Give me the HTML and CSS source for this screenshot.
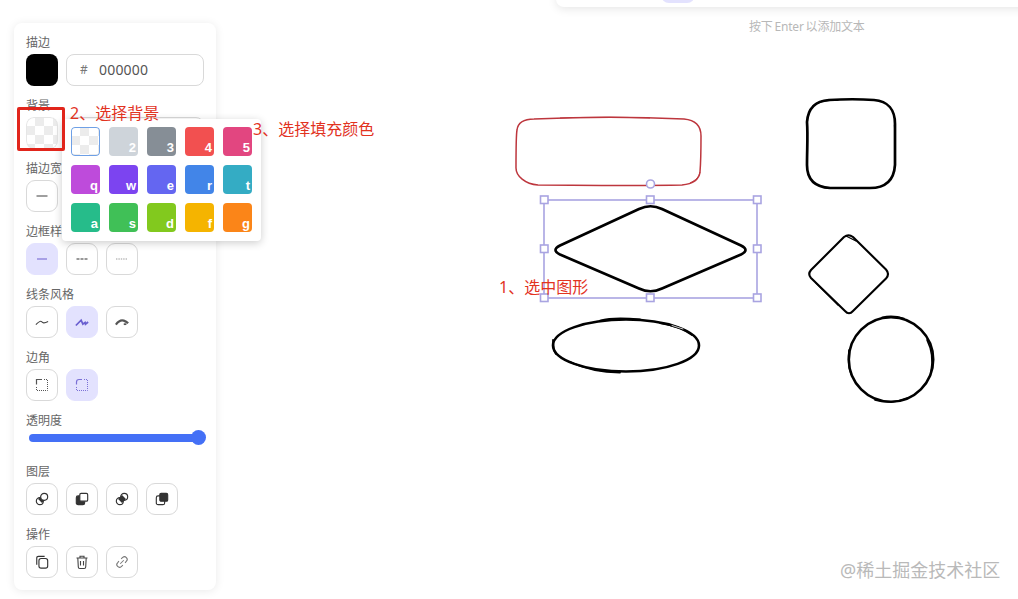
FILE: index.html
```html
<!DOCTYPE html>
<html lang="zh-CN">
<head>
<meta charset="utf-8">
<title>Whiteboard</title>
<link rel="stylesheet" href="styles.css">
</head>
<body>
<svg class="canvas" width="1018" height="599" viewBox="0 0 1018 599" fill="none">
  <g stroke="#bd363d" stroke-width="1.5">
    <path d="M534 119C580 117 640 117 684 119C695 120 701 126 701 136C701 150 701 160 700 172C699 181 692 184 682 185C630 186 570 185 538 185C525 184 516 176 516 168C516 150 516 135 517 130C518 122 525 119 534 119Z"/>
    <path stroke-width="1" d="M560 118C590 117 620 117 650 118M690 183C696 180 699 177 700 172"/>
  </g>
  <g stroke="#000" stroke-linecap="round" stroke-linejoin="round">
    <path stroke-width="2.7" d="M639 209Q650.500 203.500 662 209L741 245.500Q750 250 741 254.500L662 288.500Q650.500 294 639 288.500L560 254.500Q551 250 560 245.500Z"/>
    <path stroke-width="2.7" d="M829 100C845 99 860 99 874 100C888 101 895 110 895 124C895 140 895 150 895 165C894 180 886 188 870 188C855 188 842 188 830 188C814 187 807 179 807 165C807 150 808 135 807 122C808 108 815 101 829 100Z"/>
    <path stroke-width="1.300" d="M894.500 125C895.500 140 895.500 150 894.500 168M813 106C820 100 830 100 838 100M825 187.500C840 188.500 850 188.500 862 188"/>
    <path stroke-width="2.100" d="M844 237Q848.500 233.500 853 237L886 269.500Q890 274 886 278.500L853 311Q849 315.500 845 311L811 278Q807.500 274 811 270Z"/>
    <path stroke-width="1.300" d="M816 283L838 305M846 236L856 241"/>
    <circle cx="891" cy="359.500" r="42.200" stroke-width="2.600"/>
    <path stroke-width="1.600" d="M882 317.500C888 316 896 316 904 318.500M875 400C885 403 895 403 908 398M849 350C848 358 848 365 851 374M927 340C932 350 933 362 931 372"/>
    <ellipse cx="626" cy="345.500" rx="73" ry="26" stroke-width="2.600"/>
    <path stroke-width="1.800" d="M600 320.500C610 318 625 318 640 319.500M570 362C585 369 600 372.500 620 372.500M553 340C553 345 553 350 556 354M660 323C672 325 684 329 692 335"/>
    <path stroke="#fff" stroke-width="0.800" d="M672 325.500L683 329"/>
  </g>
  <g stroke="#a9a4e1" stroke-width="1.600">
    <rect x="544" y="200" width="213" height="98"/>
    <circle cx="650.500" cy="184" r="4" fill="#fff"/>
    <g fill="#fff">
      <rect x="540.500" y="196" width="7.500" height="7.500"/>
      <rect x="646.500" y="196" width="7.500" height="7.500"/>
      <rect x="753.500" y="196" width="7.500" height="7.500"/>
      <rect x="540.500" y="245" width="7.500" height="7.500"/>
      <rect x="753.500" y="245" width="7.500" height="7.500"/>
      <rect x="540.500" y="294" width="7.500" height="7.500"/>
      <rect x="646.500" y="294" width="7.500" height="7.500"/>
      <rect x="753.500" y="294" width="7.500" height="7.500"/>
    </g>
  </g>
</svg>

<div class="toolbar"><span class="toolbar-active"></span></div>
<div class="hint">按下 Enter 以添加文本</div>

<aside class="panel">
  <section class="group">
    <div class="label">描边</div>
    <div class="row">
      <span class="color-swatch black"></span>
      <div class="hex"><span class="hash">#</span><span>000000</span></div>
    </div>
  </section>

  <section class="group anchor">
    <div class="label">背景</div>
    <div class="row">
      <span class="color-swatch checker"></span>
      <div class="hex"></div>
    </div>
    <div class="popup">
      <span class="sw checker selected"></span>
      <span class="sw c2">2</span>
      <span class="sw c3">3</span>
      <span class="sw c4">4</span>
      <span class="sw c5">5</span>
      <span class="sw cq">q</span>
      <span class="sw cw">w</span>
      <span class="sw ce">e</span>
      <span class="sw cr">r</span>
      <span class="sw ct">t</span>
      <span class="sw ca">a</span>
      <span class="sw cs">s</span>
      <span class="sw cd">d</span>
      <span class="sw cf">f</span>
      <span class="sw cg">g</span>
    </div>
  </section>

  <section class="group">
    <div class="label">描边宽度</div>
    <div class="row">
      <button class="btn"><svg width="16" height="16" viewBox="0 0 16 16"><path d="M2.500 8H13.500" stroke="#888" stroke-width="1.600"/></svg></button>
      <button class="btn"></button>
      <button class="btn"></button>
    </div>
  </section>

  <section class="group">
    <div class="label">边框样式</div>
    <div class="row">
      <button class="btn active"><svg width="16" height="16" viewBox="0 0 16 16"><path d="M3 8H13" stroke="#8f85dc" stroke-width="1.400"/></svg></button>
      <button class="btn"><svg width="16" height="16" viewBox="0 0 16 16"><path d="M2.500 8H13.500" stroke="#777" stroke-width="1.500" stroke-dasharray="3 1"/></svg></button>
      <button class="btn"><svg width="16" height="16" viewBox="0 0 16 16"><path d="M2 8H14" stroke="#999" stroke-width="1.200" stroke-dasharray="1.400 1"/></svg></button>
    </div>
  </section>

  <section class="group">
    <div class="label">线条风格</div>
    <div class="row">
      <button class="btn"><svg class="small" viewBox="0 0 16 16" fill="none"><path d="M1 11C4 8 6 6 7.500 7.500C9 9 10 10 15 7.500" stroke="#444" stroke-width="1.300"/></svg></button>
      <button class="btn active"><svg class="small" viewBox="0 0 16 16" fill="none"><path d="M1 12L7 6L9 10.500L11.500 8.500L12 10.500L15 8" stroke="#6a5fd0" stroke-width="2"/></svg></button>
      <button class="btn"><svg class="small" viewBox="0 0 16 16" fill="none"><path d="M1 11C4 7 7 5.500 10 6.500C12.500 7.300 14 8.500 15 9.500" stroke="#555" stroke-width="2.600"/><path d="M10 10.500L13 10.500" stroke="#555" stroke-width="2"/></svg></button>
    </div>
  </section>

  <section class="group">
    <div class="label">边角</div>
    <div class="row">
      <button class="btn"><svg width="14" height="14" viewBox="0 0 14 14" fill="none"><path d="M1.500 6.500V1.500H7" stroke="#555" stroke-width="1.200"/><path d="M9 1.500H12.500V12.500H1.500V8" stroke="#555" stroke-dasharray="1 1"/></svg></button>
      <button class="btn active"><svg width="14" height="14" viewBox="0 0 14 14" fill="none"><path d="M1.500 6.500V4Q1.500 1.500 4 1.500H7" stroke="#7b70d6" stroke-width="1.200"/><path d="M9 1.500H12.500V12.500H1.500V8" stroke="#7b70d6" stroke-dasharray="1 1"/></svg></button>
    </div>
  </section>

  <section class="group">
    <div class="label">透明度</div>
    <div class="slider"><span class="thumb"></span></div>
  </section>

  <section class="group">
    <div class="label">图层</div>
    <div class="row">
      <button class="btn"><svg class="small" viewBox="0 0 16 16" fill="none" stroke="#333" stroke-width="1.300"><circle cx="5.500" cy="10.500" r="4" fill="#fff"/><path d="M3.500 8L8 3.500L12.500 8L8 12.500Z" fill="#333" stroke="none"/><circle cx="10.500" cy="5.500" r="4" fill="#fff"/></svg></button>
      <button class="btn"><svg class="small" viewBox="0 0 16 16" fill="none" stroke="#333" stroke-width="1.300"><rect x="1.500" y="4.500" width="9.500" height="10" rx="2" fill="#333"/><rect x="5.500" y="1.500" width="9" height="9" rx="1.500" fill="#fff"/></svg></button>
      <button class="btn"><svg class="small" viewBox="0 0 16 16" fill="none" stroke="#333" stroke-width="1.300"><circle cx="5.500" cy="10.500" r="4" fill="#fff"/><circle cx="10.500" cy="5.500" r="4" fill="#fff"/><path d="M3.500 8L8 3.500L12.500 8L8 12.500Z" fill="#333" stroke="none"/></svg></button>
      <button class="btn"><svg class="small" viewBox="0 0 16 16" fill="none" stroke="#333" stroke-width="1.300"><rect x="1.500" y="4.500" width="9.500" height="10" rx="2" fill="#fff"/><rect x="5.500" y="1.500" width="9" height="9" rx="1.500" fill="#333"/></svg></button>
    </div>
  </section>

  <section class="group last">
    <div class="label">操作</div>
    <div class="row">
      <button class="btn"><svg class="small" viewBox="0 0 16 16" fill="none" stroke="#333" stroke-width="1.300"><path d="M2 11V3.500Q2 1.500 4 1.500H11"/><rect x="4.500" y="4" width="10" height="11" rx="2.500"/></svg></button>
      <button class="btn"><svg width="16" height="16" viewBox="0 0 16 16" fill="none" stroke="#444" stroke-width="1.100"><path d="M2.500 4H13.500M6 4V2.200H10V4M3.800 4L4.300 13Q4.300 14.500 5.800 14.500H10.200Q11.700 14.500 11.700 13L12.200 4M6.500 7V11.500M9.500 7V11.500"/></svg></button>
      <button class="btn"><svg class="small" viewBox="0 0 16 16" fill="none" stroke="#777" stroke-width="1.200"><path d="M6 10L10 6M7 4.500L8.800 2.800C10 1.700 11.800 1.700 13 2.900C14.200 4.100 14.200 5.900 13.100 7.100L11.500 9M9 11.500L7.200 13.200C6 14.300 4.200 14.300 3 13.100C1.800 11.900 1.800 10.100 2.900 8.900L4.500 7"/></svg></button>
    </div>
  </section>
</aside>

<div class="note-box"></div>
<div class="note note-1">1、选中图形</div>
<div class="note note-2">2、选择背景</div>
<div class="note note-3">3、选择填充颜色</div>
<div class="watermark">@稀土掘金技术社区</div>
</body>
</html>
```

FILE: styles.css
```css
* { box-sizing: border-box; }

html, body {
  height: 599px;
  overflow: hidden;
}

body {
  margin: 0;
  padding: 23px 0 0 14px;
  background: #fff;
  color: #555;
  font-family: "Noto Sans", "Noto Sans CJK SC", sans-serif;
  font-size: 12px;
}

.canvas {
  position: absolute;
  left: 0;
  top: 0;
}

.toolbar {
  position: absolute;
  left: 556px;
  top: -10px;
  width: 480px;
  height: 17px;
  background: #fff;
  border-radius: 8px;
  box-shadow: 0 2px 10px rgba(0, 0, 0, 0.1);
}

.toolbar-active {
  position: absolute;
  left: 105px;
  bottom: 4px;
  width: 34px;
  height: 32px;
  border-radius: 8px;
  background: #e3e2fe;
}

.hint {
  position: absolute;
  left: 749px;
  top: 18px;
  color: #b8b8b8;
  font-size: 12px;
  line-height: 18px;
  word-spacing: -1px;
  letter-spacing: -0.2px;
  white-space: nowrap;
}

.panel {
  position: relative;
  width: 202px;
  height: 567px;
  padding: 12px;
  background: #fff;
  border-radius: 8px;
  box-shadow: 0 1px 10px rgba(0, 0, 0, 0.09);
}

.group { margin-bottom: 12px; }
.group.last { margin-bottom: 0; }
.anchor { position: relative; }

.label {
  height: 16px;
  margin-bottom: 3px;
  color: #666;
  font-size: 12px;
  line-height: 16px;
  white-space: nowrap;
}

.row {
  display: flex;
  gap: 8px;
}

.small {
  width: 14px;
  height: 14px;
}

.color-swatch {
  flex: none;
  width: 32px;
  height: 32px;
  border-radius: 8px;
}

.black { background: #000; }

.checker {
  background-color: #fff;
  background-image: conic-gradient(#ececec 25%, #fff 0 50%, #ececec 0 75%, #fff 0);
  background-size: 18px 18px;
  box-shadow: inset 0 0 0 1px #e6e6e6;
}

.hex {
  display: flex;
  align-items: center;
  flex: 1;
  height: 32px;
  padding: 0 0 2px 13px;
  border: 1px solid #d9d9d9;
  border-radius: 8px;
  color: #555;
  font-size: 14px;
  letter-spacing: 0.2px;
}

.hash {
  width: 19px;
  color: #777;
  font-size: 12px;
}

.btn {
  display: flex;
  align-items: center;
  justify-content: center;
  width: 32px;
  height: 32px;
  padding: 0;
  border: 1px solid #d9d9d9;
  border-radius: 9px;
  background: #fff;
}

.btn.active {
  border-color: #e3e2fe;
  background: #e3e2fe;
}

.slider {
  position: relative;
  width: 175px;
  height: 8px;
  margin: 5px 0 22px 3px;
  border-radius: 4px;
  background: #4470f6;
}

.thumb {
  position: absolute;
  right: -2px;
  top: -4px;
  width: 15px;
  height: 15px;
  border-radius: 50%;
  background: #4470f6;
}

.popup {
  position: absolute;
  left: 36px;
  top: 21px;
  z-index: 2;
  display: grid;
  grid-template-columns: repeat(5, 29px);
  grid-auto-rows: 29px;
  column-gap: 9px;
  row-gap: 9px;
  width: 199px;
  height: 122px;
  padding: 8px 9px;
  border-radius: 4px;
  background: #fff;
  box-shadow: 0 2px 8px rgba(0, 0, 0, 0.2);
}

.sw {
  display: flex;
  align-items: flex-end;
  justify-content: flex-end;
  padding: 0 2px 1px 0;
  border-radius: 4px;
  color: #fff;
  font-family: "Liberation Sans", sans-serif;
  font-size: 13px;
  font-weight: 700;
  line-height: 15px;
}

.selected { box-shadow: inset 0 0 0 1px #6ea0e6; }
.c2 { background: #ced4da; }
.c3 { background: #868e96; }
.c4 { background: #f25050; }
.c5 { background: #e24680; }
.cq { background: #be4bdb; }
.cw { background: #7c44f0; }
.ce { background: #6466f1; }
.cr { background: #4285e8; }
.ct { background: #34acc4; }
.ca { background: #26bc8a; }
.cs { background: #40c057; }
.cd { background: #82c91e; }
.cf { background: #f5b400; }
.cg { background: #fb8518; }

.note-box {
  position: absolute;
  left: 17px;
  top: 107px;
  z-index: 3;
  width: 48px;
  height: 44px;
  border: 3px solid #e1251b;
  border-radius: 2px;
}

.note {
  position: absolute;
  z-index: 3;
  color: #e2331f;
  font-size: 16px;
  line-height: 20px;
  white-space: nowrap;
}

.note-1 { left: 499px; top: 277px; }
.note-2 { left: 70px; top: 103px; }
.note-3 { left: 253px; top: 119px; }

.watermark {
  position: absolute;
  left: 840px;
  top: 557px;
  color: #b9b9b9;
  font-size: 18px;
  line-height: 26px;
  white-space: nowrap;
}
```
